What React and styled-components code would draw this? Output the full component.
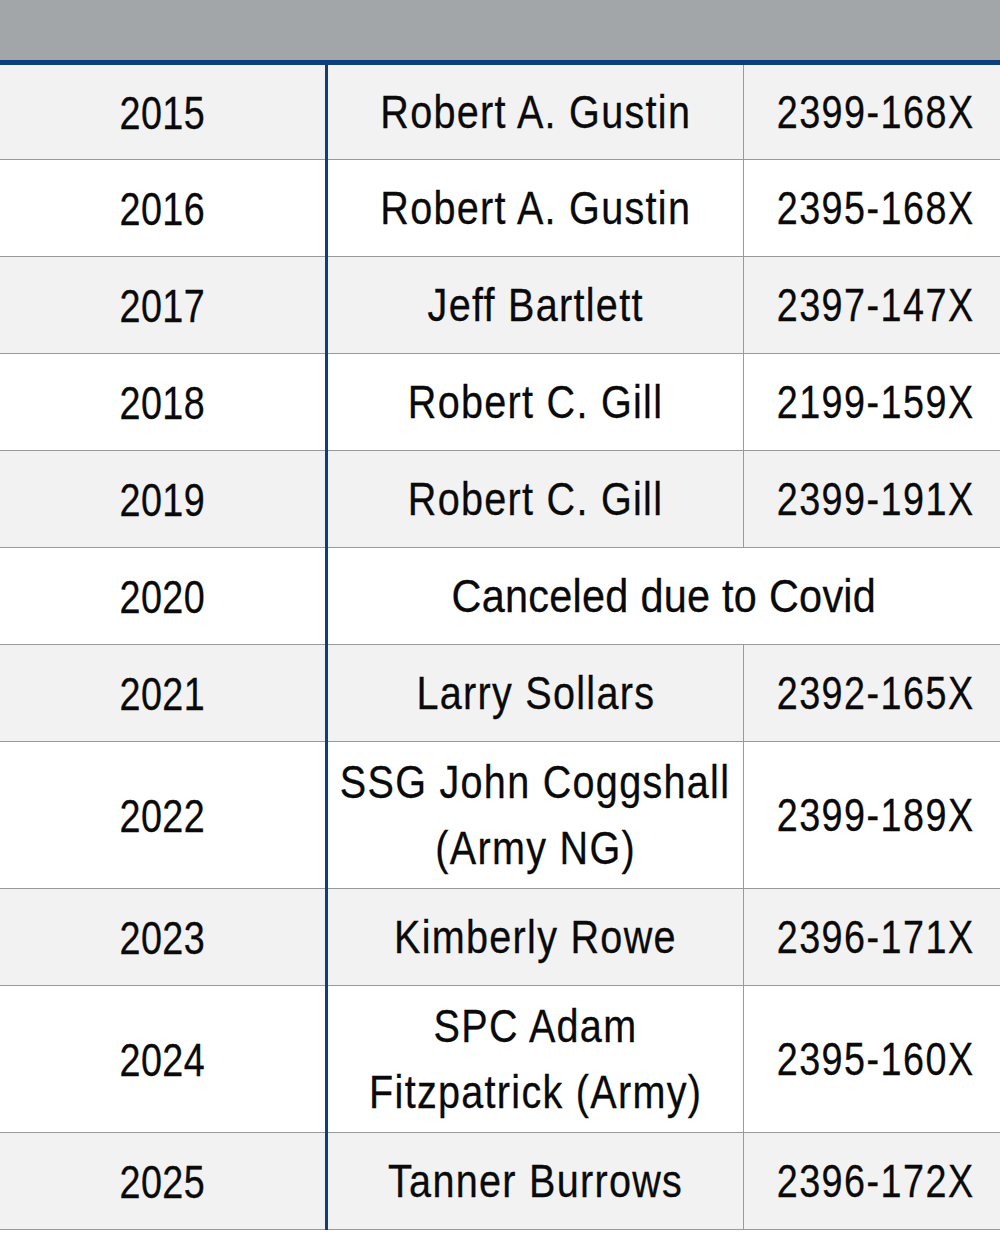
import React from "react"
import styled, { createGlobalStyle } from "styled-components"

const GlobalStyle = createGlobalStyle`
  html, body {
    margin: 0;
    padding: 0;
    background: #ffffff;
  }
  body {
    font-family: "Liberation Sans", Arial, sans-serif;
  }
`

const rows = [
  { year: "2015", name: ["Robert A. Gustin"], id: "2399-168X" },
  { year: "2016", name: ["Robert A. Gustin"], id: "2395-168X" },
  { year: "2017", name: ["Jeff Bartlett"], id: "2397-147X" },
  { year: "2018", name: ["Robert C. Gill"], id: "2199-159X" },
  { year: "2019", name: ["Robert C. Gill"], id: "2399-191X" },
  { year: "2020", note: "Canceled due to Covid" },
  { year: "2021", name: ["Larry Sollars"], id: "2392-165X" },
  { year: "2022", name: ["SSG John Coggshall", "(Army NG)"], id: "2399-189X" },
  { year: "2023", name: ["Kimberly Rowe"], id: "2396-171X" },
  { year: "2024", name: ["SPC Adam", "Fitzpatrick (Army)"], id: "2395-160X" },
  { year: "2025", name: ["Tanner Burrows"], id: "2396-172X" },
]

const App = () => {
  return (
    <>
      <GlobalStyle />
      <Table>
        <Header />
        {rows.map((r, i) => (
          <Row key={r.year} $shaded={i % 2 === 0} $first={i === 0}>
            <YearCell>
              <Text $sx={0.82} $ls={0.6}>
                {r.year}
              </Text>
            </YearCell>
            {r.note ? (
              <NoteCell>
                <Text $sx={0.9} $ls={0.3}>
                  {r.note}
                </Text>
              </NoteCell>
            ) : (
              <>
                <NameCell>
                  {r.name.map((line) => (
                    <Text key={line} $sx={0.86} $ls={1.5}>
                      {line}
                    </Text>
                  ))}
                </NameCell>
                <IdCell>
                  <Text $sx={0.82} $ls={1.8}>
                    {r.id}
                  </Text>
                </IdCell>
              </>
            )}
          </Row>
        ))}
      </Table>
    </>
  )
}

const Table = styled.div`
  width: 1000px;
  display: flex;
  flex-direction: column;
  color: #0a0a0a;
`

const Header = styled.div`
  height: 60px;
  background: #a3a6a9;
  border-bottom: 5px solid #0d3f7c;
`

const Row = styled.div`
  display: grid;
  grid-template-columns: 325px 3px 415px 1px 256px;
  min-height: ${(p) => (p.$first ? "94px" : "96px")};
  background: ${(p) => (p.$shaded ? "#f2f2f2" : "#ffffff")};
  border-bottom: 1px solid #9a9a9a;
`

const Cell = styled.div`
  display: flex;
  flex-direction: column;
  align-items: center;
  justify-content: center;
  padding: 7px 0;
  font-size: 46px;
  line-height: 66px;
  text-align: center;
  white-space: nowrap;
`

const YearCell = styled(Cell)`
  grid-column: 1;
  border-right: 3px solid #0d3f7c;
  margin-right: -3px;
  margin-bottom: -1px;
`

const NameCell = styled(Cell)`
  grid-column: 3;
  border-right: 1px solid #9a9a9a;
  margin-right: -1px;
`

const NoteCell = styled(Cell)`
  grid-column: 3 / 6;
`

const IdCell = styled(Cell)`
  grid-column: 5;
  padding-left: 8px;
`

const Text = styled.span`
  display: block;
  letter-spacing: ${(p) => p.$ls}px;
  transform: scaleX(${(p) => p.$sx});
  transform-origin: center;
  -webkit-text-stroke: 0.3px #0a0a0a;
`

export default App
